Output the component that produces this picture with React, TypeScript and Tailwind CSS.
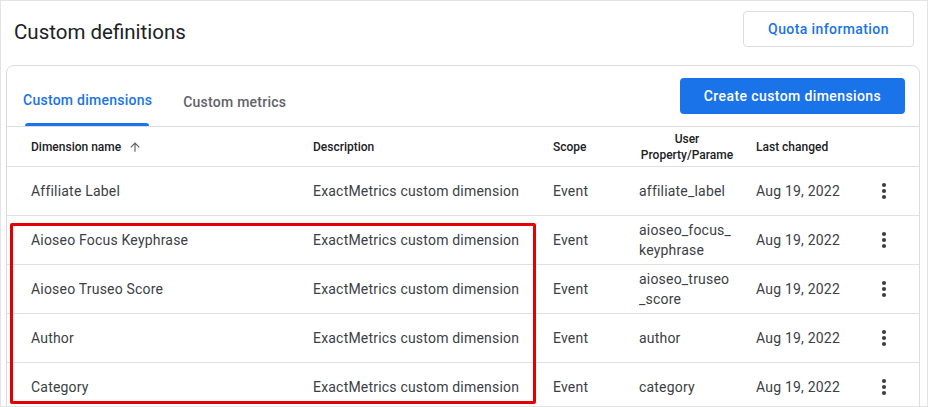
import React from "react";

const rows = [
  { name: "Affiliate Label", prop: "affiliate_label" },
  { name: "Aioseo Focus Keyphrase", prop: "aioseo_focus_ keyphrase" },
  { name: "Aioseo Truseo Score", prop: "aioseo_truseo _score" },
  { name: "Author", prop: "author" },
  { name: "Category", prop: "category" },
];

function Kebab() {
  return (
    <svg width="24" height="24" viewBox="0 0 24 24" fill="#3c4043">
      <circle cx="12" cy="6" r="2.1" />
      <circle cx="12" cy="12" r="2.1" />
      <circle cx="12" cy="18" r="2.1" />
    </svg>
  );
}

function ArrowUp() {
  return (
    <svg width="14" height="14" viewBox="0 0 24 24" fill="#5f6368">
      <path d="M4 12l1.41 1.41L11 7.83V20h2V7.83l5.58 5.59L20 12l-8-8-8 8z" />
    </svg>
  );
}

export default function App() {
  return (
    <div
      className="relative w-[928px] h-[407px] overflow-hidden bg-white border border-[#e3e3e3]"
      style={{ fontFamily: "Roboto, 'Liberation Sans', sans-serif" }}
    >
      <div className="flex justify-between items-start pl-[13px] pr-[13px] pt-[10px]">
        <div className="text-[20.5px] leading-[28px] text-[#202124] pt-[7px]">
          Custom definitions
        </div>
        <button className="w-[171px] h-[36px] rounded-[4px] border border-[#dadce0] bg-white text-[14px] font-medium tracking-[0.4px] text-[#1a73e8]">
          Quota information
        </button>
      </div>

      <div className="mt-[18px] ml-[5px] mr-[7px] border border-[#dadce0] rounded-[8px]">
        <div className="flex justify-between items-start pt-[12px] pr-[14px] border-b border-[#dadce0]">
          <div className="flex pl-[16px] gap-[31px]">
            <div className="flex flex-col h-[48px]">
              <div className="flex-1 flex items-center text-[14px] font-medium tracking-[0.25px] text-[#1a73e8]">
                Custom dimensions
              </div>
              <div className="ml-[2px] w-[124px] h-[3px] rounded-t-[3px] bg-[#1a73e8]" />
            </div>
            <div className="flex flex-col h-[48px]">
              <div className="flex-1 flex items-center text-[14px] font-medium tracking-[0.25px] text-[#5f6368]">
                Custom metrics
              </div>
            </div>
          </div>
          <button className="w-[225px] h-[36px] rounded-[4px] bg-[#1a73e8] text-white text-[14px] font-medium tracking-[0.4px]">
            Create custom dimensions
          </button>
        </div>

        <div className="flex items-center h-[40px] pl-[24px] border-b border-[#e0e0e0] text-[12px] font-medium text-[#202124]">
          <div className="w-[282px] flex items-center gap-[7px]">
            Dimension name <ArrowUp />
          </div>
          <div className="w-[240px]">Description</div>
          <div className="w-[86px]">Scope</div>
          <div className="w-[117px]">
            <div className="w-[96px] text-center leading-[16px]">User Property/Parame</div>
          </div>
          <div className="w-[116px]">Last changed</div>
        </div>

        {rows.map((r) => (
          <div
            key={r.name}
            className="flex items-center h-[49px] pl-[24px] border-b border-[#e0e0e0] text-[14px] tracking-[0.2px] text-[#3c4043]"
          >
            <div className="w-[282px]">{r.name}</div>
            <div className="w-[240px]">ExactMetrics custom dimension</div>
            <div className="w-[86px]">Event</div>
            <div className="w-[117px]">
              <div className="w-[96px] leading-[20px]">{r.prop}</div>
            </div>
            <div className="w-[116px]">Aug 19, 2022</div>
            <div className="w-[24px] flex justify-center">
              <Kebab />
            </div>
          </div>
        ))}
      </div>

      <div className="absolute left-[9px] top-[222px] w-[526px] h-[181px] border-[3px] border-[#e40000] rounded-[2px]" />
    </div>
  );
}
